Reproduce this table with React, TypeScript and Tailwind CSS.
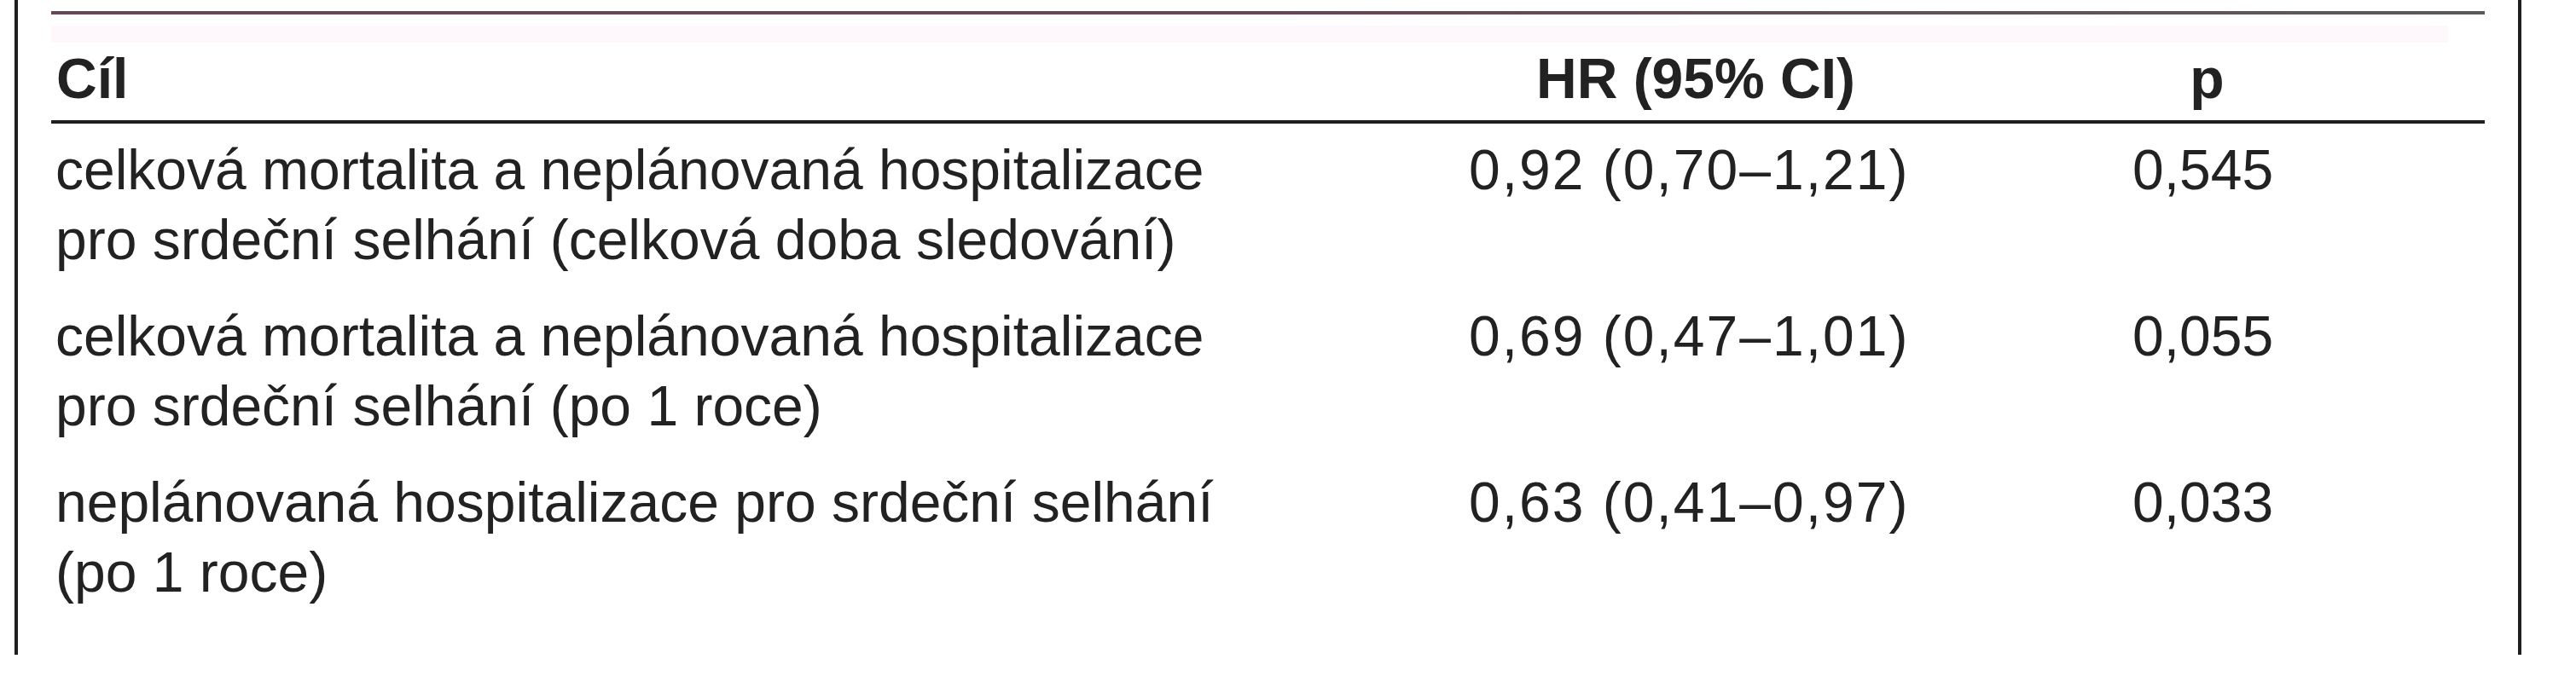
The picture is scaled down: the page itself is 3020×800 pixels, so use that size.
const rows = [
  {
    goal: ["celková mortalita a neplánovaná hospitalizace", "pro srdeční selhání (celková doba sledování)"],
    hr: "0,92 (0,70–1,21)",
    p: "0,545",
  },
  {
    goal: ["celková mortalita a neplánovaná hospitalizace", "pro srdeční selhání (po 1 roce)"],
    hr: "0,69 (0,47–1,01)",
    p: "0,055",
  },
  {
    goal: ["neplánovaná hospitalizace pro srdeční selhání", "(po 1 roce)"],
    hr: "0,63 (0,41–0,97)",
    p: "0,033",
  },
];

export default function App() {
  return (
    <div
      className="w-[3020px] h-[800px] bg-white text-[#222]"
      style={{ fontFamily: '"Liberation Sans", Arial, sans-serif' }}
    >
      <div className="ml-[17px] w-[2939px] h-[768px] border-x-4 border-[#1f1f1f]">
        <div className="ml-[39px] w-[2853px] pt-[13px]">
          {/* top rule */}
          <div className="h-[4px] bg-gradient-to-r from-[#684456] via-[#684456] to-[#5a5a5a]" />
          <div className="mt-[13px] h-[20px] w-[2810px] bg-[#fef8fc]" />

          {/* header */}
          <div className="grid grid-cols-[1662px_778px_1fr] pt-[1px] pb-[8px] text-[66px] leading-[82px] font-bold">
            <div className="pl-[6px]">Cíl</div>
            <div className="w-[532px] text-center">HR (95% CI)</div>
            <div className="w-[175px] text-center">p</div>
          </div>
          <div className="h-[4px] bg-[#1f1f1f]" />

          {/* body */}
          <div className="flex flex-col gap-[31px] pt-[13px] text-[66px] leading-[82px]">
            {rows.map((r) => (
              <div key={r.hr} className="grid grid-cols-[1662px_778px_1fr]">
                <div className="pl-[5px]">
                  {r.goal.map((line) => (
                    <div key={line} className="whitespace-nowrap">
                      {line}
                    </div>
                  ))}
                </div>
                <div className="whitespace-nowrap tracking-[2px]">{r.hr}</div>
                <div className="whitespace-nowrap">{r.p}</div>
              </div>
            ))}
          </div>
        </div>
      </div>
    </div>
  );
}
